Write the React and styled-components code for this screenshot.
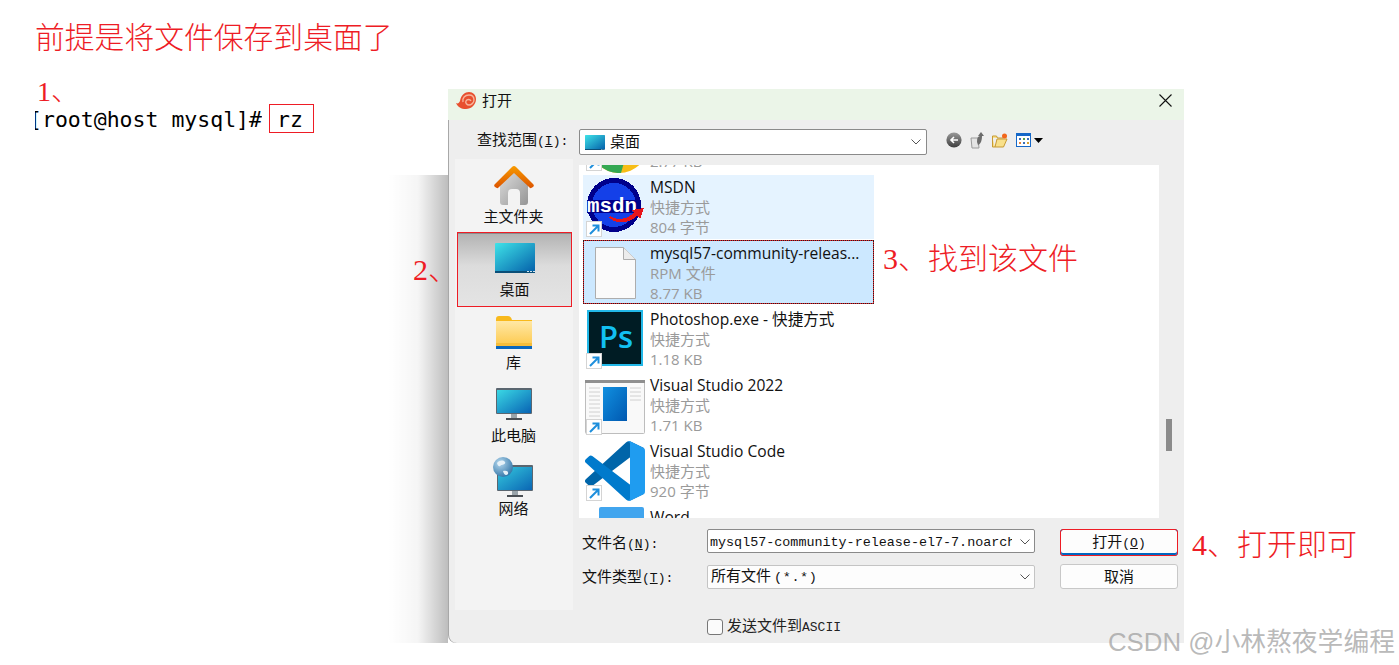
import React from "react";
import styled, { createGlobalStyle } from "styled-components";

const GlobalStyle = createGlobalStyle`
  html, body {
    margin: 0;
    background: #ffffff;
    overflow: hidden;
  }
`;

const CJK = `"Noto Sans CJK SC", sans-serif`;
const NOTE_FONT = `"Liberation Serif", "Noto Sans CJK SC", serif`;
const UI_FONT = `"Open Sans", "Noto Sans CJK SC", sans-serif`;
const RED = "#ee1c25";

const Page = styled.div`
  position: relative;
  display: flex;
  width: 1399px;
  height: 665px;
  overflow: hidden;
`;

const Notes = styled.div`
  display: flex;
  flex-direction: column;
  align-items: flex-start;
  flex: none;
  box-sizing: border-box;
  width: 448px;
  padding: 18px 0 0 35px;
`;

const Heading = styled.div`
  font: 300 29.8px/40px ${NOTE_FONT};
  color: ${RED};
  white-space: nowrap;
`;

const StepOne = styled.div`
  margin: 21px 0 0 2px;
  font: 300 28px/26px ${NOTE_FONT};
  color: ${RED};
`;

const Terminal = styled.div`
  display: flex;
  align-items: center;
  gap: 7px;
  margin-top: -1px;
  font: 21.5px/29px "DejaVu Sans Mono", monospace;
  color: #000000;
  white-space: nowrap;
`;

const Prompt = styled.div`
  width: 227px;
  overflow: hidden;
`;

const PromptText = styled.span`
  display: block;
  margin: 1px 0 -1px -6px;
`;

const CommandBox = styled.span`
  box-sizing: border-box;
  width: 45px;
  height: 29px;
  padding-left: 7px;
  border: 1px solid ${RED};
`;

const Dialog = styled.div`
  position: relative;
  display: flex;
  flex-direction: column;
  width: 736px;
  height: 554px;
  margin-top: 89px;
  background: #eeeeee;
  border-bottom-left-radius: 8px;
  box-shadow: inset 1px 0 0 #a8a8a8;

  &::before {
    content: "";
    position: absolute;
    left: -60px;
    top: 86px;
    bottom: 0;
    width: 60px;
    background: linear-gradient(to right, rgba(0, 0, 0, 0), rgba(0, 0, 0, 0.04) 50%, rgba(0, 0, 0, 0.26));
  }
`;

const TitleBar = styled.div`
  display: flex;
  align-items: center;
  box-sizing: border-box;
  height: 31px;
  padding: 0 12px 9px 8px;
  background: #ebf5e8;
  font: 15px/20px ${CJK};
  color: #111111;
`;

const TitleText = styled.span`
  flex: 1;
  margin-left: 5px;
`;

const Toolbar = styled.div`
  display: flex;
  align-items: center;
  box-sizing: border-box;
  height: 39px;
  padding: 5px 0 0 29px;
  font: 15px/20px ${CJK};
  color: #111111;
`;

const ToolLabel = styled.span`
  width: 102px;
  margin-top: -3px;
`;

const Hot = styled.span`
  font-family: "Liberation Mono", monospace;
  font-size: 13px;
`;

const Pattern = styled(Hot)`
  margin-left: 3px;
  font-size: 13.5px;
  letter-spacing: 0.6px;
`;

const LookIn = styled.div`
  display: flex;
  align-items: center;
  box-sizing: border-box;
  width: 348px;
  height: 26px;
  padding: 0 5px 0 5px;
  gap: 5px;
  background: #ffffff;
  border: 1px solid #8a8a8a;
  border-radius: 2px;
`;

const LookInText = styled.span`
  margin-top: -3px;
`;

const Grow = styled.span`
  flex: 1;
`;

const ToolIcons = styled.div`
  display: flex;
  align-items: center;
  gap: 8px;
  margin: 0 0 4px 19px;
`;

const Content = styled.div`
  display: flex;
  height: 451px;
  padding-left: 7px;
`;

const Sidebar = styled.div`
  display: flex;
  flex-direction: column;
  box-sizing: border-box;
  flex: none;
  width: 118px;
  margin-right: 6px;
  padding: 1px 2px 0 3px;
  background: #f3f3f3;
`;

const Place = styled.div`
  position: relative;
  display: flex;
  flex-direction: column;
  align-items: center;
  justify-content: flex-end;
  box-sizing: border-box;
  height: 73px;
  padding: 0 ${(p) => (p.$active ? 0 : 2)}px 7px 0;
  font: 15px/20px ${CJK};
  color: #111111;
  ${(p) =>
    p.$active &&
    `
    background: linear-gradient(#b2b2b2, #dcdcdc 45%, #e4e4e4);
    box-shadow: inset 0 1px 0 #8c8c8c;
    outline: 1px solid ${RED};
  `}
`;

const PlaceIcon = styled.div`
  display: flex;
  align-items: flex-end;
  justify-content: center;
  height: 44px;
  margin-bottom: ${(p) => p.$lift || 1}px;
`;

const Callout = styled.span`
  position: absolute;
  font: 300 30px/40px ${NOTE_FONT};
  color: ${RED};
  white-space: nowrap;
  left: ${(p) => p.$left};
  top: ${(p) => p.$top};
`;

const RightPane = styled.div`
  display: flex;
  flex-direction: column;
  width: 605px;
`;

const ListRow = styled.div`
  display: flex;
  height: 353px;
  margin-top: 6px;
`;

const FileList = styled.div`
  flex: none;
  width: 580px;
  background: #ffffff;
  overflow: hidden;
`;

const FileItems = styled.div`
  margin-top: -56px;
`;

const ScrollGutter = styled.div`
  flex: 1;
  padding: 254px 0 0 7px;
`;

const ScrollThumb = styled.div`
  width: 6px;
  height: 32px;
  background: #8b8b8b;
`;

const FileItem = styled.div`
  position: relative;
  display: flex;
  box-sizing: border-box;
  width: 291px;
  height: 64px;
  margin: ${(p) => (p.$selected ? "-1px 0 3px 4px" : "0 0 2px 4px")};
  padding-top: ${(p) => (p.$selected ? 3 : 2)}px;
  background: ${(p) => (p.$selected ? "#cce8ff" : p.$hover ? "#e5f3ff" : "transparent")};
  ${(p) =>
    p.$selected &&
    `
    box-shadow: inset 0 0 0 1px ${RED};
    outline: 1px dotted #222222;
    outline-offset: -1px;
  `}
`;

const IconSlot = styled.div`
  position: relative;
  flex: none;
  width: 67px;
  height: 62px;
`;

const IconPos = styled.div`
  position: absolute;
  left: ${(p) => p.$x}px;
  top: ${(p) => p.$y}px;
  line-height: 0;
`;

const ShortcutBadge = styled.span`
  position: absolute;
  left: 3px;
  top: 44px;
  display: flex;
  align-items: center;
  justify-content: center;
  box-sizing: border-box;
  width: 16px;
  height: 16px;
  background: #ffffff;
  border: 1px solid #d4d4d4;
`;

const FileMeta = styled.div`
  display: flex;
  flex-direction: column;
  font: 15px/20px ${UI_FONT};
`;

const FileName = styled.span`
  font-size: 15.6px;
  color: #111111;
  white-space: nowrap;
`;

const FileDetail = styled.span`
  color: #9a9a9a;
  white-space: nowrap;
`;

const Form = styled.div`
  display: grid;
  grid-template-columns: 103px 328px 118px;
  column-gap: 25px;
  row-gap: 8px;
  margin-top: 11px;
  align-items: center;
`;

const FieldLabel = styled.span`
  padding: 2px 0 0 3px;
  font: 15px/20px ${CJK};
  color: #111111;
  white-space: nowrap;
`;

const FileInput = styled.div`
  display: flex;
  align-items: center;
  align-self: start;
  box-sizing: border-box;
  height: 24px;
  padding: 2px 4px 0 2px;
  gap: 8px;
  background: #ffffff;
  border: 1px solid #8a8a8a;
  border-radius: 2px;
  font: 13.4px "Liberation Mono", monospace;
  color: #111111;
`;

const InputText = styled.span`
  flex: 1;
  overflow: hidden;
  white-space: nowrap;
`;

const TypeSelect = styled.div`
  display: flex;
  align-items: center;
  box-sizing: border-box;
  height: 24px;
  padding: 0 4px 0 3px;
  background: #fdfdfd;
  border: 1px solid #c4c4c4;
  border-radius: 2px;
  font: 15px/20px ${CJK};
  color: #111111;
`;

const Button = styled.div`
  position: relative;
  display: flex;
  align-items: center;
  justify-content: center;
  box-sizing: border-box;
  height: ${(p) => (p.$primary ? 27 : 25)}px;
  padding-bottom: ${(p) => (p.$primary ? 0 : 2)}px;
  background: #fdfdfd;
  border: 1px solid ${(p) => (p.$primary ? "#0067c0" : "#c8c8c8")};
  border-radius: 3px;
  font: 15px/20px ${CJK};
  color: #111111;
  ${(p) =>
    p.$primary &&
    `
    outline: 1px solid ${RED};
    outline-offset: -1px;
    box-shadow: inset 0 -2px 0 #0067c0;
  `}
`;

const CheckRow = styled.div`
  display: flex;
  align-items: center;
  gap: 4px;
  height: 33px;
  padding: 0 0 0 259px;
  box-sizing: border-box;
  font: 15px/20px ${CJK};
  color: #222222;
`;

const CheckBox = styled.span`
  box-sizing: border-box;
  width: 16px;
  height: 16px;
  background: #fbfbfb;
  border: 1px solid #777777;
  border-radius: 3px;
`;

const Watermark = styled.div`
  position: absolute;
  right: 4px;
  bottom: 8px;
  font: 25.8px/30px "Liberation Sans", "Noto Sans CJK SC", sans-serif;
  color: rgba(150, 150, 150, 0.68);
  white-space: nowrap;
`;

const Chevron = () => (
  <svg width="10" height="6" viewBox="0 0 10 6">
    <path d="M.5.5 5 5 9.5.5" fill="none" stroke="#555" />
  </svg>
);

const SnailIcon = () => (
  <svg width="21" height="19" viewBox="0 0 21 19">
    <path d="M0 12c2 1 3 0 4-2C5 4 9 1 13 1c4 0 7 3 7 7 0 6-5 10-10 10-5 0-8-2-10-6z" fill="#e8502f" />
    <path d="M7 11c-1-4 2-7 6-7 3 0 5 2 5 5 0 3-3 5-5 5-2 0-4-2-3-4 1-2 4-2 5 0" fill="none" stroke="#f6b59c" strokeWidth="1.4" />
  </svg>
);

const CloseIcon = () => (
  <svg width="13" height="13" viewBox="0 0 13 13">
    <path d="M.5.5l12 12M12.5.5l-12 12" stroke="#111" strokeWidth="1.1" />
  </svg>
);

const BackIcon = () => (
  <svg width="16" height="16" viewBox="0 0 16 16">
    <defs>
      <linearGradient id="backFill" x1="0" y1="0" x2="0" y2="1">
        <stop offset="0" stopColor="#9a9a9a" />
        <stop offset="1" stopColor="#3e3e3e" />
      </linearGradient>
    </defs>
    <circle cx="8" cy="8" r="7.6" fill="url(#backFill)" />
    <path d="M12 8H5M8 5 5 8l3 3" fill="none" stroke="#fff" strokeWidth="1.6" />
  </svg>
);

const UpIcon = () => (
  <svg width="14" height="17" viewBox="0 0 14 17">
    <path d="M1 6h7l1 10H2z" fill="#e4e4e4" stroke="#9a9a9a" />
    <path d="M7 10c0-4 1-6 3-6H8l3-4 3 4h-2c0 4-1 8-4 9z" fill="#6b6b6b" />
  </svg>
);

const NewFolderIcon = () => (
  <svg width="16" height="15" viewBox="0 0 16 15">
    <path d="M.5 5V14h11L15 6H5L3 14" fill="#f8e08a" stroke="#c79a33" />
    <path d="M.5 5V3h4l1 2h6" fill="#f8e08a" stroke="#c79a33" />
    <circle cx="12.5" cy="3" r="2.5" fill="#f2661b" />
  </svg>
);

const ViewIcon = () => (
  <svg width="28" height="14" viewBox="0 0 28 14">
    <rect x=".5" y=".5" width="14" height="13" fill="#fff" stroke="#1668c8" />
    <rect x="1" y="1" width="13" height="2" fill="#1668c8" />
    <rect x="3" y="5" width="2" height="2" fill="#3a6fb8" />
    <rect x="7" y="5" width="2" height="2" fill="#58a04a" />
    <rect x="11" y="5" width="2" height="2" fill="#3a6fb8" />
    <rect x="3" y="9" width="2" height="2" fill="#e8823c" />
    <rect x="7" y="9" width="2" height="2" fill="#3a6fb8" />
    <rect x="11" y="9" width="2" height="2" fill="#d8a030" />
    <path d="M18 5h9l-4.5 5z" fill="#000" />
  </svg>
);

const DesktopIcon = ({ id, width = 40, height = 30 }) => (
  <svg width={width} height={height} viewBox="0 0 40 30">
    <defs>
      <linearGradient id={id} x1="0" y1="0" x2="1" y2="1">
        <stop offset="0" stopColor="#3fe3e8" />
        <stop offset="1" stopColor="#0562ab" />
      </linearGradient>
    </defs>
    <path d="M1 0h38a1 1 0 0 1 1 1v27H0V1a1 1 0 0 1 1-1z" fill={`url(#${id})`} />
    <rect y="28" width="40" height="2" fill="#0b4f78" />
    <path d="M32 28h2v1h-2zM35 28h2v1h-2zM38 28h2v1h-2z" fill="#cfe4ee" />
  </svg>
);

const HomeIcon = () => (
  <svg width="40" height="40" viewBox="0 0 40 40">
    <defs>
      <linearGradient id="homeWall" x1="0" y1="0" x2="1" y2="1">
        <stop offset="0" stopColor="#dedede" />
        <stop offset="1" stopColor="#959595" />
      </linearGradient>
      <linearGradient id="homeRoof" x1="0" y1="0" x2="0" y2="1">
        <stop offset="0" stopColor="#f79a00" />
        <stop offset="1" stopColor="#dc5400" />
      </linearGradient>
    </defs>
    <path d="M6 19 20 6l14 13v18a3 3 0 0 1-3 3h-5V28a4 4 0 0 0-4-4h-4a4 4 0 0 0-4 4v12H9a3 3 0 0 1-3-3z" fill="url(#homeWall)" />
    <path d="M1 19 18 2a3 3 0 0 1 4 0l17 17a2 2 0 0 1 0 3l-1 .5a2 2 0 0 1-3-.5L20 8 5 22a2 2 0 0 1-3 .5l-1-.5a2 2 0 0 1 0-3z" fill="url(#homeRoof)" />
  </svg>
);

const FolderIcon = () => (
  <svg width="36" height="33" viewBox="0 0 36 33">
    <defs>
      <linearGradient id="folderBody" x1="0" y1="0" x2="0" y2="1">
        <stop offset="0" stopColor="#ffe8a6" />
        <stop offset="1" stopColor="#fdc94c" />
      </linearGradient>
    </defs>
    <path d="M0 3a3 3 0 0 1 3-3h9c2 0 3 1 4 4h20v6H0z" fill="#f8b91c" />
    <rect y="5" width="36" height="25" fill="url(#folderBody)" />
    <rect y="27" width="36" height="3" fill="#f5bc3a" />
    <rect y="30" width="36" height="3" fill="#0a66bd" />
  </svg>
);

const MonitorIcon = ({ id }) => (
  <svg width="36" height="32" viewBox="0 0 36 32">
    <defs>
      <linearGradient id={id} x1="0" y1="0" x2="1" y2="1">
        <stop offset="0" stopColor="#3ad8e4" />
        <stop offset="1" stopColor="#0863b4" />
      </linearGradient>
    </defs>
    <rect width="36" height="26" rx="1" fill="#5a6670" />
    <rect x="1" y="2" width="34" height="23" fill={`url(#${id})`} />
    <rect x="15" y="26" width="6" height="4" fill="#9aa4aa" />
    <rect x="10" y="30" width="16" height="2" fill="#4a4f54" />
  </svg>
);

const NetworkIcon = () => (
  <svg width="42" height="40" viewBox="0 0 42 40">
    <defs>
      <linearGradient id="netScreen" x1="0" y1="0" x2="1" y2="1">
        <stop offset="0" stopColor="#35c9de" />
        <stop offset="1" stopColor="#0a66b4" />
      </linearGradient>
      <radialGradient id="netGlobe" cx="0.35" cy="0.3" r="0.8">
        <stop offset="0" stopColor="#b5d8ee" />
        <stop offset="1" stopColor="#2a6fa3" />
      </radialGradient>
    </defs>
    <rect x="4" y="8" width="36" height="26" rx="1" fill="#5a6670" />
    <rect x="5" y="10" width="34" height="23" fill="url(#netScreen)" />
    <rect x="19" y="34" width="6" height="4" fill="#9aa4aa" />
    <rect x="14" y="38" width="16" height="2" fill="#4a4f54" />
    <circle cx="10" cy="10" r="10" fill="url(#netGlobe)" />
    <path d="M4 6c3-3 6-3 8-1 1 2-2 3-4 3-1 2-3 2-4-2zM10 14c3-1 6 0 5 3-2 2-4 1-5-3z" fill="#e6f1f8" />
  </svg>
);

const ArrowBadge = () => (
  <ShortcutBadge>
    <svg width="11" height="11" viewBox="0 0 11 11">
      <path d="M1 10 9 2M3.5 1.5H9.5V7.5" fill="none" stroke="#1e8fdc" strokeWidth="2" />
    </svg>
  </ShortcutBadge>
);

const ChromeIcon = () => (
  <svg width="40" height="60" viewBox="0 0 40 60">
    <circle cx="20" cy="30" r="30" fill="#f7bd15" />
    <path d="M0 52a30 30 0 0 0 22 8l4-14z" fill="#34a853" />
  </svg>
);

const MsdnIcon = () => (
  <svg width="58" height="54" viewBox="0 0 58 54" shapeRendering="crispEdges">
    <circle cx="28" cy="27" r="27" fill="#00008b" />
    <circle cx="28" cy="27" r="22" fill="#1440e8" />
    <rect x="1" y="22" width="50" height="13" fill="#00008b" />
    <text x="1" y="34" fontFamily="'Liberation Mono', monospace" fontSize="20" fontWeight="700" fill="#ffffff" textLength="50" lengthAdjust="spacingAndGlyphs">
      msdn
    </text>
    <path d="M24 38c8 5 16 4 24-3l-2-3 12-2-4 11-3-3c-7 7-20 9-28 2z" fill="#e8151b" />
  </svg>
);

const DocIcon = () => (
  <svg width="41" height="52" viewBox="0 0 41 52">
    <path d="M.5.5h28l12 12v39H.5z" fill="#fafafa" stroke="#adadad" />
    <path d="M28.5.5v12h12" fill="#ececec" stroke="#adadad" />
  </svg>
);

const PsIcon = () => (
  <svg width="56" height="56" viewBox="0 0 56 56">
    <rect x="1" y="1" width="54" height="54" fill="#001c24" stroke="#22b8e8" strokeWidth="2" />
    <text x="12" y="38" fontFamily="'Open Sans', sans-serif" fontSize="31" fontWeight="600" fill="#12c0f2">
      Ps
    </text>
  </svg>
);

const WindowIcon = () => (
  <svg width="60" height="54" viewBox="0 0 60 54">
    <defs>
      <linearGradient id="winPane" x1="0" y1="0" x2="1" y2="1">
        <stop offset="0" stopColor="#1190e0" />
        <stop offset="1" stopColor="#0058b0" />
      </linearGradient>
    </defs>
    <rect x=".5" y=".5" width="59" height="53" rx="1" fill="#f9f9f9" stroke="#bdbdbd" />
    <rect width="60" height="3" fill="#8f8f8f" />
    <rect x="18" y="7" width="24" height="34" fill="url(#winPane)" />
    <path d="M4 8h11M4 12h11M4 16h11M4 20h11M4 24h11M4 28h11M4 32h11M4 36h11M45 8h11M45 12h11M45 16h11M45 20h11" stroke="#d0d0d0" />
  </svg>
);

const VsCodeIcon = () => (
  <svg width="60" height="60" viewBox="0 0 100 100">
    <path fill="#0065A9" d="M96.4614 10.7962L75.8569 0.875542C73.4719 -0.272773 70.6217 0.211611 68.75 2.08333L1.29858 63.5832C-0.515693 65.2373 -0.513607 68.0937 1.30308 69.7452L6.81272 74.754C8.29793 76.1042 10.5347 76.2036 12.1338 74.9905L93.3609 13.3699C96.086 11.3026 100 13.2462 100 16.6667V16.4275C100 14.0265 98.6246 11.8378 96.4614 10.7962Z" />
    <path fill="#007ACC" d="M96.4614 89.2038L75.8569 99.1245C73.4719 100.273 70.6217 99.7884 68.75 97.9167L1.29858 36.4168C-0.515693 34.7627 -0.513607 31.9063 1.30308 30.2548L6.81272 25.246C8.29793 23.8958 10.5347 23.7964 12.1338 25.0095L93.3609 86.6301C96.086 88.6974 100 86.7538 100 83.3333V83.5725C100 85.9735 98.6246 88.1622 96.4614 89.2038Z" />
    <path fill="#1F9CF0" d="M75.8578 99.1263C73.4721 100.274 70.6219 99.7885 68.75 97.9166C71.0564 100.223 75 98.5895 75 95.3278V4.67213C75 1.41039 71.0564 -0.223106 68.75 2.08329C70.6219 0.211402 73.4721 -0.273666 75.8578 0.873633L96.4587 10.7807C98.6234 11.8217 100 14.0112 100 16.4132V83.5871C100 85.9891 98.6234 88.1786 96.4586 89.2196L75.8578 99.1263Z" />
  </svg>
);

const WordIcon = () => (
  <svg width="45" height="40" viewBox="0 0 45 40">
    <path d="M2 0h41a2 2 0 0 1 2 2v38H0V2a2 2 0 0 1 2-2z" fill="#41a5ee" />
  </svg>
);

const places = [
  { label: "主文件夹", icon: <HomeIcon />, lift: 1 },
  { label: "桌面", icon: <DesktopIcon id="placeDesktop" />, active: true, lift: 6 },
  { label: "库", icon: <FolderIcon />, lift: 3 },
  { label: "此电脑", icon: <MonitorIcon id="placeMonitor" />, lift: 5 },
  { label: "网络", icon: <NetworkIcon />, lift: 1 },
];

const files = [
  { name: "Google Chrome", detail: "快捷方式", size: "2.77 KB", icon: <ChromeIcon />, x: 16, y: 2, badge: true },
  { name: "MSDN", detail: "快捷方式", size: "804 字节", icon: <MsdnIcon />, x: 3, y: 1, badge: true, hover: true },
  { name: "mysql57-community-releas...", detail: "RPM 文件", size: "8.77 KB", icon: <DocIcon />, x: 12, y: 4, selected: true },
  { name: "Photoshop.exe - 快捷方式", detail: "快捷方式", size: "1.18 KB", icon: <PsIcon />, x: 4, y: 1, badge: true },
  { name: "Visual Studio 2022", detail: "快捷方式", size: "1.71 KB", icon: <WindowIcon />, x: 2, y: 5, badge: true },
  { name: "Visual Studio Code", detail: "快捷方式", size: "920 字节", icon: <VsCodeIcon />, x: 2, y: 0, badge: true },
  { name: "Word", detail: "快捷方式", size: "2.77 KB", icon: <WordIcon />, x: 16, y: 0, badge: true },
];

function App() {
  return (
    <Page>
      <GlobalStyle />
      <Notes>
        <Heading>前提是将文件保存到桌面了</Heading>
        <StepOne>1、</StepOne>
        <Terminal>
          <Prompt>
            <PromptText>[root@host mysql]#</PromptText>
          </Prompt>
          <CommandBox>rz</CommandBox>
        </Terminal>
      </Notes>
      <Dialog>
        <TitleBar>
          <SnailIcon />
          <TitleText>打开</TitleText>
          <CloseIcon />
        </TitleBar>
        <Toolbar>
          <ToolLabel>
            查找范围<Hot>(<u>I</u>):</Hot>
          </ToolLabel>
          <LookIn>
            <DesktopIcon id="lookInDesktop" width={20} height={15} />
            <LookInText>桌面</LookInText>
            <Grow />
            <Chevron />
          </LookIn>
          <ToolIcons>
            <BackIcon />
            <UpIcon />
            <NewFolderIcon />
            <ViewIcon />
          </ToolIcons>
        </Toolbar>
        <Content>
          <Sidebar>
            {places.map((place) => (
              <Place key={place.label} $active={place.active}>
                <PlaceIcon $lift={place.lift}>{place.icon}</PlaceIcon>
                {place.label}
                {place.active && (
                  <Callout $left="-45px" $top="17px">
                    2、
                  </Callout>
                )}
              </Place>
            ))}
          </Sidebar>
          <RightPane>
            <ListRow>
              <FileList>
                <FileItems>
                  {files.map((file) => (
                    <FileItem key={file.name} $hover={file.hover} $selected={file.selected}>
                      <IconSlot>
                        <IconPos $x={file.x} $y={file.y}>
                          {file.icon}
                        </IconPos>
                        {file.badge && <ArrowBadge />}
                      </IconSlot>
                      <FileMeta>
                        <FileName>{file.name}</FileName>
                        <FileDetail>{file.detail}</FileDetail>
                        <FileDetail>{file.size}</FileDetail>
                      </FileMeta>
                      {file.selected && (
                        <Callout $left="300px" $top="-1px">
                          3、找到该文件
                        </Callout>
                      )}
                    </FileItem>
                  ))}
                </FileItems>
              </FileList>
              <ScrollGutter>
                <ScrollThumb />
              </ScrollGutter>
            </ListRow>
            <Form>
              <FieldLabel>
                文件名<Hot>(<u>N</u>):</Hot>
              </FieldLabel>
              <FileInput>
                <InputText>mysql57-community-release-el7-7.noarch.rpm</InputText>
                <Chevron />
              </FileInput>
              <Button $primary>
                <span>
                  打开<Hot>(<u>O</u>)</Hot>
                </span>
                <Callout $left="131px" $top="-5px">
                  4、打开即可
                </Callout>
              </Button>
              <FieldLabel>
                文件类型<Hot>(<u>T</u>):</Hot>
              </FieldLabel>
              <TypeSelect>
                <InputText>
                  所有文件<Pattern>(*.*)</Pattern>
                </InputText>
                <Chevron />
              </TypeSelect>
              <Button>取消</Button>
            </Form>
          </RightPane>
        </Content>
        <CheckRow>
          <CheckBox />
          <span>
            发送文件到<Hot>ASCII</Hot>
          </span>
        </CheckRow>
      </Dialog>
      <Watermark>CSDN @小林熬夜学编程</Watermark>
    </Page>
  );
}

export default App;
